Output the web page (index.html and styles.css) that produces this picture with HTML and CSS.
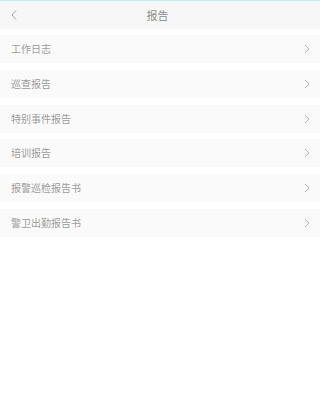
FILE: index.html
```html
<!DOCTYPE html>
<html lang="zh">
<head>
<meta charset="utf-8">
<title>报告</title>
<link rel="stylesheet" href="styles.css">
</head>
<body>
<div class="page">
  <header class="topbar">
    <span class="back">
      <svg width="6" height="10" viewBox="0 0 6 10"><polyline points="5,0.5 1,5 5,9.5" fill="none" stroke="#9a9a9a" stroke-width="0.9"/></svg>
    </span>
    <h1 class="title">报告</h1>
    <span class="spacer"></span>
  </header>
  <ul class="list">
    <li class="row"><span class="label">工作日志</span><svg class="arrow" width="6" height="10" viewBox="0 0 6 10"><polyline points="1,1 5,5 1,9" fill="none" stroke="#a8a8a8" stroke-width="0.9"/></svg></li>
    <li class="row"><span class="label">巡查报告</span><svg class="arrow" width="6" height="10" viewBox="0 0 6 10"><polyline points="1,1 5,5 1,9" fill="none" stroke="#a8a8a8" stroke-width="0.9"/></svg></li>
    <li class="row"><span class="label">特别事件报告</span><svg class="arrow" width="6" height="10" viewBox="0 0 6 10"><polyline points="1,1 5,5 1,9" fill="none" stroke="#a8a8a8" stroke-width="0.9"/></svg></li>
    <li class="row"><span class="label">培训报告</span><svg class="arrow" width="6" height="10" viewBox="0 0 6 10"><polyline points="1,1 5,5 1,9" fill="none" stroke="#a8a8a8" stroke-width="0.9"/></svg></li>
    <li class="row"><span class="label">报警巡检报告书</span><svg class="arrow" width="6" height="10" viewBox="0 0 6 10"><polyline points="1,1 5,5 1,9" fill="none" stroke="#a8a8a8" stroke-width="0.9"/></svg></li>
    <li class="row"><span class="label">警卫出勤报告书</span><svg class="arrow" width="6" height="10" viewBox="0 0 6 10"><polyline points="1,1 5,5 1,9" fill="none" stroke="#a8a8a8" stroke-width="0.9"/></svg></li>
  </ul>
</div>
</body>
</html>
```
FILE: styles.css
```css
html, body {
  margin: 0;
  padding: 0;
  background: #ffffff;
}
body {
  font-family: "Noto Sans CJK SC", "Noto Sans", sans-serif;
  min-height: 415px;
  overflow: hidden;
}
.page {
  display: flex;
  flex-direction: column;
}
.topbar {
  height: 28px;
  border-top: 1px solid #c9ecf3;
  background: #f7f7f7;
  display: flex;
  align-items: center;
  padding: 0 16px 0 11px;
}
.back {
  width: 6px;
  height: 10px;
  display: flex;
}
.spacer {
  width: 6px;
}
.title {
  flex: 1;
  margin: 0;
  text-align: center;
  font-size: 11px;
  font-weight: normal;
  color: #8c8c8c;
  line-height: 14px;
}
.list {
  list-style: none;
  margin: 0;
  padding: 6px 0 0 0;
  display: flex;
  flex-direction: column;
  gap: 6.8px;
}
.row {
  height: 28px;
  background: #fafafa;
  display: flex;
  align-items: center;
  justify-content: space-between;
  padding: 0 10px 0 11px;
}
.label {
  font-size: 10px;
  color: #9c9c9c;
  line-height: 12px;
}
.arrow {
  display: block;
}
```
